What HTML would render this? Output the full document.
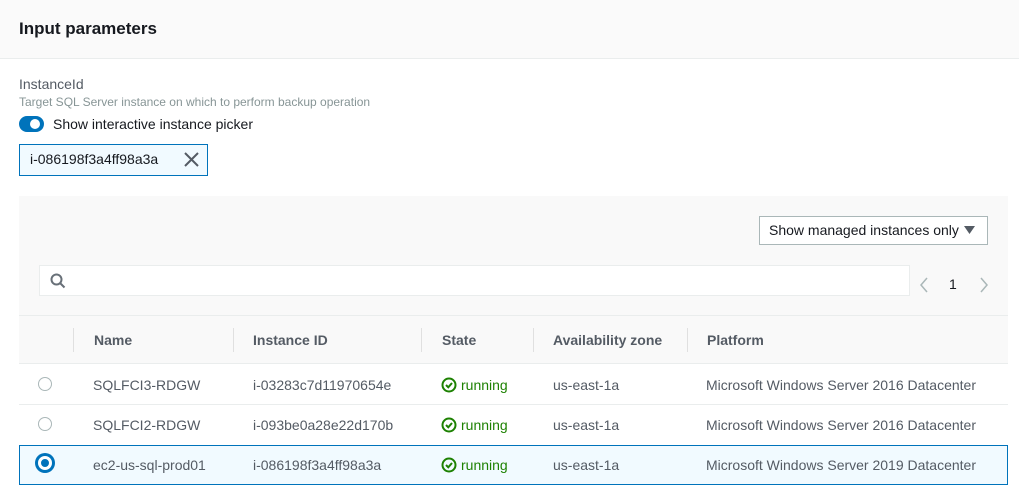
<!DOCTYPE html>
<html><head><style>
body{margin:0;width:1019px;height:500px;overflow:hidden;background:#fff;font-family:"Liberation Sans",sans-serif;color:#16191f;position:relative}
.a{position:absolute;white-space:nowrap}
.hd{left:0;top:0;width:1019px;height:58px;background:#fafafa;border-bottom:1px solid #eaeded}
.th{font-weight:bold;color:#545b64;font-size:14px;top:332px}
.td{font-size:14px;color:#545b64}
.run{color:#1d8102}
.sep{width:1px;height:24px;background:#e0e0e0;top:328px}
.row{left:19px;width:989px;height:40px;background:#fff;border-bottom:1px solid #eaeded}
.rad{width:12px;height:12px;border:1px solid #aab7b8;border-radius:50%;background:#fff}
</style></head><body>
<div class="a hd"></div>
<div class="a" style="left:19px;top:19px;font-size:17px;font-weight:bold">Input parameters</div>
<div class="a" style="left:19px;top:76px;font-size:14px;color:#545b64">InstanceId</div>
<div class="a" style="left:19px;top:95px;font-size:12px;color:#879596">Target SQL Server instance on which to perform backup operation</div>
<div class="a" style="left:19px;top:116px;width:25px;height:16px;border-radius:8px;background:#0073bb"></div>
<div class="a" style="left:30px;top:119px;width:10px;height:10px;border-radius:50%;background:#fff"></div>
<div class="a" style="left:53px;top:116px;font-size:14px;color:#16191f">Show interactive instance picker</div>
<div class="a" style="left:19px;top:144px;width:187px;height:30px;background:#f1faff;border:1px solid #0073bb"></div>
<div class="a" style="left:30px;top:151px;font-size:14px;color:#16191f">i-086198f3a4ff98a3a</div>
<svg class="a" style="left:184px;top:152px" width="15" height="15" viewBox="0 0 15 15"><path d="M1 1L14 14M14 1L1 14" stroke="#545b64" stroke-width="2"/></svg>
<div class="a" style="left:19px;top:196px;width:989px;height:289px;background:#f9f9f9"></div>
<div class="a" style="left:759px;top:216px;width:227px;height:27px;background:#fff;border:1px solid #aab7b8"></div>
<div class="a" style="left:769px;top:222px;font-size:14px">Show managed instances only</div>
<svg class="a" style="left:964px;top:226px" width="11" height="9"><path d="M0 0H11L5.5 8Z" fill="#545b64"/></svg>
<div class="a" style="left:39px;top:265px;width:869px;height:29px;background:#fff;border:1px solid #eaeded"></div>
<svg class="a" style="left:50px;top:273px" width="16" height="16" viewBox="0 0 16 16"><circle cx="6.5" cy="6.5" r="5" fill="none" stroke="#687078" stroke-width="2"/><path d="M10 10L14.5 14.5" stroke="#687078" stroke-width="2"/></svg>
<svg class="a" style="left:918px;top:277px" width="12" height="16"><path d="M9 1L3 8L9 15" fill="none" stroke="#aab7b8" stroke-width="1.5"/></svg>
<div class="a" style="left:949px;top:276px;font-size:14px">1</div>
<svg class="a" style="left:978px;top:277px" width="12" height="16"><path d="M3 1L9 8L3 15" fill="none" stroke="#aab7b8" stroke-width="1.5"/></svg>
<div class="a" style="left:19px;top:315px;width:989px;height:1px;background:#eaeded"></div>
<div class="a sep" style="left:73px"></div><div class="a sep" style="left:233px"></div><div class="a sep" style="left:421px"></div><div class="a sep" style="left:533px"></div><div class="a sep" style="left:687px"></div>
<div class="a th" style="left:94px">Name</div><div class="a th" style="left:253px">Instance ID</div><div class="a th" style="left:442px">State</div><div class="a th" style="left:553px">Availability zone</div><div class="a th" style="left:707px">Platform</div>
<div class="a" style="left:19px;top:363px;width:989px;height:1px;background:#eaeded"></div>
<div class="a row" style="top:364px"></div>
<div class="a row" style="top:405px"></div>
<div class="a" style="left:19px;top:445px;width:987px;height:38px;background:#f1faff;border:1px solid #0073bb"></div>
<div class="a rad" style="left:38px;top:377px"></div>
<div class="a rad" style="left:38px;top:417px"></div>
<div class="a" style="left:38px;top:456px;width:8px;height:8px;border:3px solid #fff;border-radius:50%;background:#0073bb;box-shadow:0 0 0 3px #0073bb"></div>
<div class="a td" style="left:93px;top:377px">SQLFCI3-RDGW</div><div class="a td" style="left:253px;top:377px">i-03283c7d11970654e</div>
<div class="a td" style="left:93px;top:417px">SQLFCI2-RDGW</div><div class="a td" style="left:253px;top:417px">i-093be0a28e22d170b</div>
<div class="a td" style="left:93px;top:457px">ec2-us-sql-prod01</div><div class="a td" style="left:253px;top:457px">i-086198f3a4ff98a3a</div>
<svg class="a" style="left:441px;top:377px" width="16" height="16"><circle cx="8" cy="8" r="6.5" fill="none" stroke="#1d8102" stroke-width="2"/><path d="M5 8L7.3 10.3L11 6" fill="none" stroke="#1d8102" stroke-width="2"/></svg>
<svg class="a" style="left:441px;top:417px" width="16" height="16"><circle cx="8" cy="8" r="6.5" fill="none" stroke="#1d8102" stroke-width="2"/><path d="M5 8L7.3 10.3L11 6" fill="none" stroke="#1d8102" stroke-width="2"/></svg>
<svg class="a" style="left:441px;top:457px" width="16" height="16"><circle cx="8" cy="8" r="6.5" fill="none" stroke="#1d8102" stroke-width="2"/><path d="M5 8L7.3 10.3L11 6" fill="none" stroke="#1d8102" stroke-width="2"/></svg>
<div class="a td run" style="left:461px;top:377px">running</div><div class="a td run" style="left:461px;top:417px">running</div><div class="a td run" style="left:461px;top:457px">running</div>
<div class="a td" style="left:553px;top:377px">us-east-1a</div><div class="a td" style="left:553px;top:417px">us-east-1a</div><div class="a td" style="left:553px;top:457px">us-east-1a</div>
<div class="a td" style="left:706px;top:377px">Microsoft Windows Server 2016 Datacenter</div>
<div class="a td" style="left:706px;top:417px">Microsoft Windows Server 2016 Datacenter</div>
<div class="a td" style="left:706px;top:457px">Microsoft Windows Server 2019 Datacenter</div>
</body></html>
